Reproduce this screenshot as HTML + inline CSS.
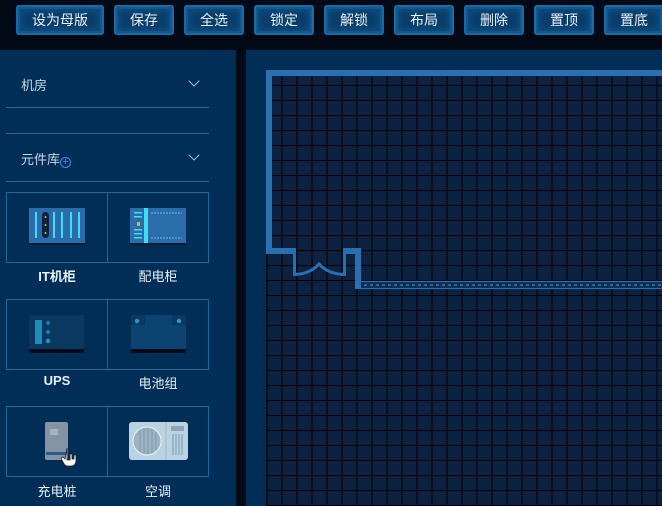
<!DOCTYPE html>
<html><head><meta charset="utf-8"><style>
*{margin:0;padding:0;box-sizing:border-box}
body{width:662px;height:506px;overflow:hidden;background:#020a18;font-family:"Liberation Sans","Noto Sans CJK SC",sans-serif;position:relative}
.a{position:absolute}
.btn{position:absolute;top:5px;height:30px;border-radius:3px;background:#0a3d6a;box-shadow:inset 0 0 0 2px #1a6aa3,inset 0 0 0 4px #12588e,inset 0 0 6px 6px #0f4f82;color:#e8f2fb;font-size:14px;text-align:center;line-height:30px}
.panel{left:0;top:50px;width:236px;height:456px;background:#002e56}
.line{position:absolute;left:6px;width:203px;height:1px;background:#1c6a9a}
.t{position:absolute;color:#c7d8ea;font-size:13px}
.chev{position:absolute;left:190px;width:8px;height:8px;border-right:1px solid #9fc3e4;border-bottom:1px solid #9fc3e4;transform:rotate(45deg)}
.card{position:absolute;border:1px solid #1a6a9e;width:102px;height:71px}
.lab{position:absolute;width:102px;text-align:center;color:#e8f0f8;font-size:13px}
</style></head><body>
<div class="btn" style="left:16px;width:88px">设为母版</div>
<div class="btn" style="left:114px;width:60px">保存</div>
<div class="btn" style="left:184px;width:60px">全选</div>
<div class="btn" style="left:254px;width:60px">锁定</div>
<div class="btn" style="left:324px;width:60px">解锁</div>
<div class="btn" style="left:394px;width:60px">布局</div>
<div class="btn" style="left:464px;width:60px">删除</div>
<div class="btn" style="left:534px;width:60px">置顶</div>
<div class="btn" style="left:604px;width:60px">置底</div>

<div class="a panel"></div>
<div class="t" style="left:21px;top:75px">机房</div>
<div class="chev" style="top:77px"></div>
<div class="line" style="top:107px"></div>
<div class="line" style="top:133px"></div>
<div class="t" style="left:21px;top:149px">元件库<span style="display:inline-block;width:11px;height:11px;border:1px solid #3a8ee8;border-radius:50%;color:#3a8ee8;font-size:11px;line-height:9px;text-align:center;vertical-align:-1px">+</span></div>
<div class="chev" style="top:151px"></div>
<div class="line" style="top:181px"></div>

<div class="card" style="left:6px;top:192px"></div><div class="card" style="left:107px;top:192px"></div>
<div class="card" style="left:6px;top:299px"></div><div class="card" style="left:107px;top:299px"></div>
<div class="card" style="left:6px;top:406px"></div><div class="card" style="left:107px;top:406px"></div>
<div class="lab" style="left:6px;top:266px;font-weight:bold">IT机柜</div>
<div class="lab" style="left:107px;top:266px">配电柜</div>
<div class="lab" style="left:6px;top:373px;font-weight:bold">UPS</div>
<div class="lab" style="left:107px;top:373px">电池组</div>
<div class="lab" style="left:6px;top:481px">充电桩</div>
<div class="lab" style="left:107px;top:481px">空调</div>

<svg class="a" style="left:0;top:0" width="236" height="506">
<rect x="29" y="208" width="56" height="35" fill="#2b6cab"/><rect x="29" y="243" width="56" height="2" fill="#0a1d35"/>
<rect x="42" y="212" width="7" height="26" rx="3.5" fill="#0b2340"/>
<circle cx="45.5" cy="217" r="1" fill="#c9c11d"/><circle cx="45.5" cy="225" r="1" fill="#c9c11d"/><circle cx="45.5" cy="233" r="1" fill="#c9c11d"/>
<g fill="#3fdcf5"><rect x="35" y="212" width="2" height="26"/><rect x="53" y="212" width="2" height="26"/><rect x="61" y="212" width="2" height="26"/><rect x="70" y="212" width="2" height="26"/><rect x="78" y="212" width="2" height="26"/></g>
<rect x="130" y="208" width="56" height="35" fill="#2b6cab"/><rect x="130" y="243" width="56" height="2" fill="#0a1d35"/>
<rect x="144" y="208" width="4" height="35" fill="#3fdcf5"/>
<g fill="#3fdcf5"><rect x="134" y="212" width="8" height="1.5"/><rect x="134" y="216" width="8" height="1.5"/><rect x="134" y="229" width="8" height="1.5"/><rect x="134" y="233" width="8" height="1.5"/><rect x="134" y="237" width="8" height="1.5"/></g>
<rect x="137" y="222" width="3" height="4" fill="#c9c11d"/>
<line x1="151" y1="213" x2="182" y2="213" stroke="#5fbde8" stroke-dasharray="2 1"/><line x1="151" y1="238" x2="182" y2="238" stroke="#5fbde8" stroke-dasharray="2 1"/>
<rect x="29" y="315" width="55" height="34" fill="#0b3860"/><rect x="29" y="349" width="55" height="4" fill="#030b18"/>
<rect x="35" y="320" width="7" height="24" fill="#1a8fb8"/>
<circle cx="48" cy="323" r="2.2" fill="#137ba3"/><circle cx="48" cy="332" r="2.2" fill="#137ba3"/><circle cx="48" cy="341" r="2.2" fill="#1a9bc8"/>
<rect x="131" y="315" width="55" height="34" fill="#0b4470"/><rect x="131" y="349" width="55" height="4" fill="#030b18"/>
<rect x="131" y="315" width="14" height="10" fill="#0b3860"/><rect x="172" y="315" width="14" height="10" fill="#0b3860"/>
<circle cx="137" cy="321" r="2.2" fill="#1a9bc8"/><circle cx="179" cy="321" r="2.2" fill="#1a9bc8"/>
<rect x="45" y="422" width="23" height="38" rx="2" fill="#8593a6"/>
<rect x="50" y="429" width="8" height="6" fill="#a7b3c2"/><rect x="46" y="452" width="21" height="3" fill="#2b5a95"/>
<path d="M67 448v12h3v-6h2v5h2v-4h2v5c0 4-2 6-5 6h-3c-3 0-4-2-5-4l-2-4 2-1 2 2z" fill="#fff" stroke="#222" stroke-width="0.8"/>
<rect x="129" y="422" width="59" height="38" rx="3" fill="#b9d3e3"/><line x1="166" y1="422" x2="166" y2="460" stroke="#9fb8cc"/>
<circle cx="147" cy="441" r="14" fill="#9cb3c4" stroke="#eaf3f9" stroke-width="1"/>
<g stroke="#7d97ab"><line x1="140" y1="430" x2="140" y2="452"/><line x1="144" y1="428" x2="144" y2="454"/><line x1="148" y1="428" x2="148" y2="454"/><line x1="152" y1="429" x2="152" y2="453"/><line x1="156" y1="432" x2="156" y2="450"/></g>
<rect x="171" y="426" width="13" height="5" fill="#8ea5b8"/>
<g stroke="#7d97ab" stroke-width="1"><line x1="173" y1="434" x2="173" y2="455"/><line x1="176" y1="434" x2="176" y2="455"/><line x1="179" y1="434" x2="179" y2="455"/><line x1="182" y1="434" x2="182" y2="455"/></g>
</svg>

<div class="a" style="left:246px;top:50px;width:416px;height:456px;background:#002e56"></div>
<div class="a" style="left:266px;top:70px;width:396px;height:436px;background-color:#0d2140;background-image:linear-gradient(90deg,#000 1px,transparent 1px),linear-gradient(#000 1px,transparent 1px);background-size:15px 15px;background-position:0.5px 0"></div>
<svg class="a" style="left:0;top:0" width="662" height="506">
<g fill="#2a6fb0">
<rect x="266" y="70" width="396" height="6"/>
<rect x="266" y="70" width="6" height="184"/>
<rect x="266" y="248" width="30" height="6"/>
<rect x="343" y="248" width="18" height="6"/>
<rect x="355" y="248" width="6" height="41"/>
</g>
<path d="M294.5 252V274.5Q310 274 319 264Q328 274 344.5 274.5V252" fill="none" stroke="#2a6fb0" stroke-width="3"/>
<rect x="361" y="281" width="301" height="8" fill="#0e2c52"/>
<line x1="361" y1="281.5" x2="662" y2="281.5" stroke="#2a6fb0" stroke-width="1.2"/>
<line x1="361" y1="288.5" x2="662" y2="288.5" stroke="#2a6fb0" stroke-width="1.2"/>
<line x1="364" y1="285" x2="662" y2="285" stroke="#3a78b5" stroke-width="1.5" stroke-dasharray="3 3"/>
</svg>
</body></html>
